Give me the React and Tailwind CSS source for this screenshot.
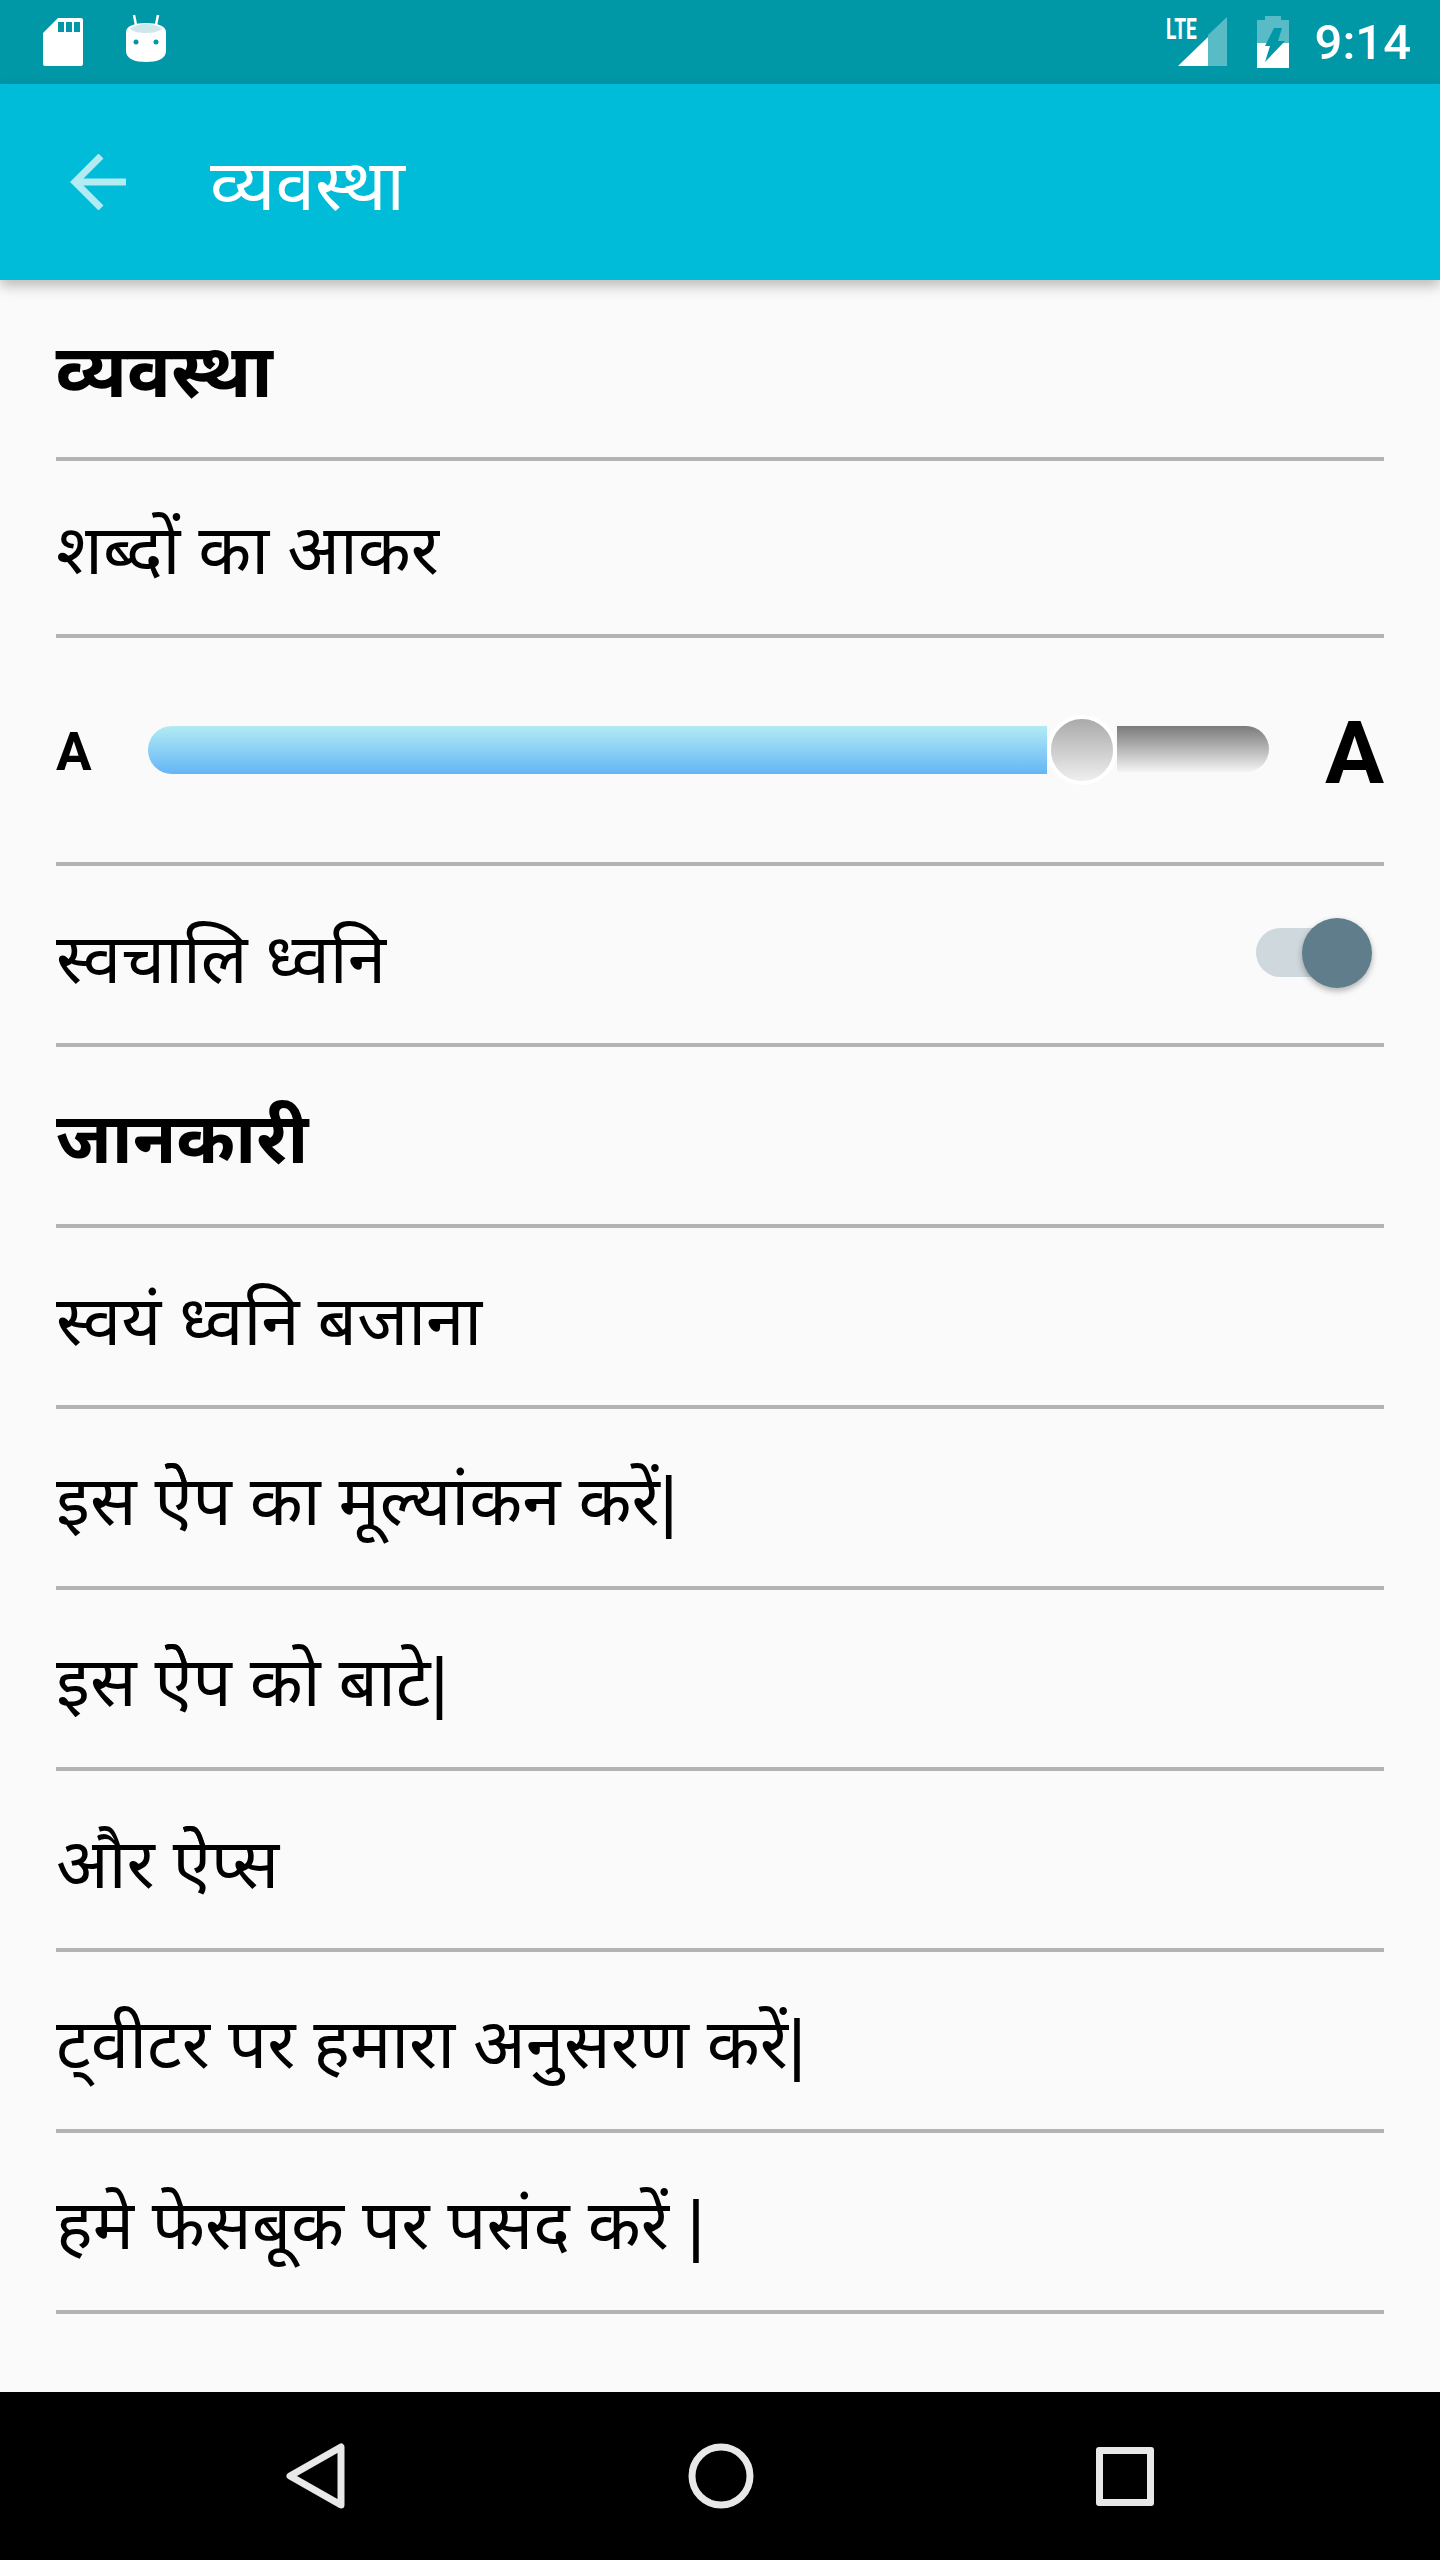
const items = [
  ['स्वयं ध्वनि बजाना', ''],
  ['इस ऐेप का मूल्यांकन करें', '|'],
  ['इस ऐेप को बाटे', '|'],
  ['और ऐेप्स', ''],
  ['ट्वीटर पर हमारा अनुसरण करें', '|'],
  ['हमे फेसबूक पर पसंद करें ', '|'],
];

function Row({ children, className = 'h-[181px] text-[69px]' }) {
  return (
    <div className={`mx-14 flex items-center border-b-4 border-[#b3b3b3] leading-none text-black ${className}`}>
      {children}
    </div>
  );
}

function SdCard() {
  return (
    <svg width="42" height="52" viewBox="0 0 42 52">
      <path fill="#fff" d="M16 2h23a2 2 0 0 1 2 2v44a2 2 0 0 1-2 2H3a2 2 0 0 1-2-2V17z" />
      <path fill="#0097a7" d="M16 6h6v10h-6zM24 6h6v10h-6zM32 6h6v10h-6z" />
    </svg>
  );
}

function Marshmallow() {
  return (
    <svg width="42" height="48" viewBox="0 0 42 48">
      <path stroke="#fff" strokeWidth="2.5" d="M9 0l2 10M33 0l-2 10" />
      <path fill="#fff" d="M1 17c0-6 9-9 20-9s20 3 20 9v19c0 8-9 11-20 11S1 44 1 36z" />
      <path fill="#cfe6ea" d="M5 14c3-3 9-5 16-5s13 2 16 5c-4 3-10 4-16 4s-12-1-16-4z" />
      <circle cx="11" cy="27" r="2.5" fill="#0097a7" />
      <circle cx="31" cy="27" r="2.5" fill="#0097a7" />
    </svg>
  );
}

export default function App() {
  return (
    <div className="w-[1440px] h-[2560px] flex flex-col bg-[#fafafa] font-['Noto_Sans','Noto_Sans_Devanagari',sans-serif] overflow-hidden">
      <div className="h-[84px] bg-[#0097a7] flex items-center pl-[42px] pr-[29px] shrink-0">
        <SdCard />
        <div className="ml-[41px] mb-1.5"><Marshmallow /></div>
        <div className="ml-auto flex items-center">
          <div className="relative w-[62px] h-[50px]">
            <svg width="62" height="50" viewBox="0 0 62 50" className="absolute top-0 left-0">
              <path fill="#fff" fillOpacity="0.35" d="M61 0v49H42V18z" />
              <path fill="#fff" d="M42 20v29H12z" />
            </svg>
            <span className="absolute top-0 left-0 origin-top-left scale-x-[0.66] text-[29px] leading-[24px] font-bold text-white font-['Roboto',sans-serif]">LTE</span>
          </div>
          <svg width="34" height="52" viewBox="0 0 34 52" className="ml-[28px]">
            <path fill="#fff" fillOpacity="0.35" d="M9 0h16v4h8v23H1V4h8z" />
            <path fill="#fff" d="M1 27h32v25H1z" />
            <path fill="#0097a7" d="M18 12h8l-4 13h7L9 46l5-16H9z" />
          </svg>
          <span className="ml-[25px] text-[49px] leading-none font-medium text-white font-['Roboto',sans-serif]">9:14</span>
        </div>
      </div>

      <div className="relative z-10 h-[196px] bg-[#00bcd9] shadow-[0_6px_12px_rgba(0,0,0,0.25)] flex items-center pl-[70px] shrink-0">
        <svg width="58" height="56" viewBox="0 0 58 56">
          <path fill="none" stroke="#b2ebf2" strokeWidth="7" d="M56 28H6M31 2L5 28l26 26" />
        </svg>
        <span className="ml-[82px] text-[71px] leading-none text-white">व्यवस्था</span>
      </div>

      <div className="flex-1">
        <Row className="h-[181px] font-bold text-[73px]">व्यवस्था</Row>
        <Row className="h-[177px] text-[69px]">शब्दों का आकर</Row>
        <Row className="h-[228px]">
          <span className="w-[92px] mt-1 text-[53px] font-bold font-['Roboto',sans-serif]">A</span>
          <div className="flex-1 flex items-center">
            <div className="w-[899px] h-12 rounded-l-3xl bg-gradient-to-b from-[#b2ebf2] to-[#64b5f6]" />
            <div className="w-[70px] h-[70px] rounded-full border-4 border-white bg-gradient-to-b from-[#aaaaaa] to-[#efefef]" />
            <div className="w-[152px] h-[46px] -mt-0.5 rounded-r-3xl bg-gradient-to-b from-[#7b7b7b] to-[#f5f5f5]" />
          </div>
          <span className="mt-1.5 text-[88px] font-bold font-['Roboto',sans-serif]">A</span>
        </Row>
        <Row className="h-[181px] text-[69px] justify-between">
          <span className="mt-1">स्वचालि ध्वनि</span>
          <div className="relative w-[102px] h-[49px] mr-[26px] -mt-1 rounded-full bg-[#cfd8dc]">
            <div className="absolute right-[-14px] top-[-10px] w-[70px] h-[70px] rounded-full bg-[#607d8b] shadow-[0_3px_6px_rgba(0,0,0,0.3)]" />
          </div>
        </Row>
        <Row className="h-[181px] font-bold text-[71px]">जानकारी</Row>
        {items.map(([text, pipe]) => (
          <Row key={text}>
            <span className="mt-1 whitespace-pre">{text}{pipe && <span className="font-['Liberation_Sans',sans-serif]">{pipe}</span>}</span>
          </Row>
        ))}
      </div>

      <div className="relative z-10 h-[168px] bg-black flex items-center shrink-0 pl-[286px]">
        <svg width="60" height="66" viewBox="0 0 60 66">
          <path fill="none" stroke="#e8e8e8" strokeWidth="7" strokeLinejoin="round" d="M55 4v58L4 33z" />
        </svg>
        <svg width="66" height="66" viewBox="0 0 66 66" className="ml-[342px]">
          <circle cx="33" cy="33" r="29" fill="none" stroke="#e8e8e8" strokeWidth="7" />
        </svg>
        <div className="ml-[342px] w-[58px] h-[59px] rounded-[3px] border-[7px] border-[#e8e8e8]" />
      </div>
    </div>
  );
}
